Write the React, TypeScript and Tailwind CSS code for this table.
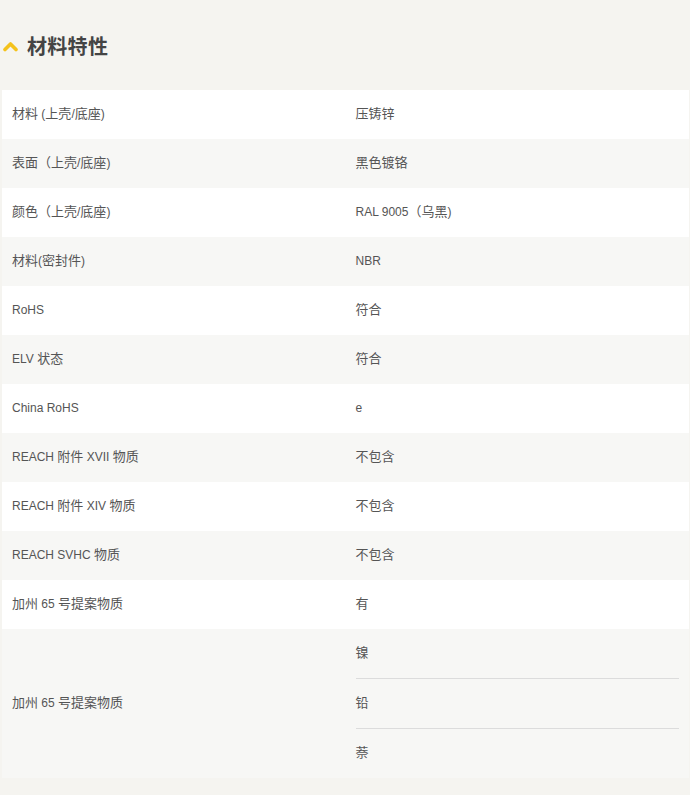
const rows: [string, string[]][] = [
  ["材料 (上壳/底座)", ["压铸锌"]],
  ["表面（上壳/底座)", ["黑色镀铬"]],
  ["颜色（上壳/底座)", ["RAL 9005（乌黑)"]],
  ["材料(密封件)", ["NBR"]],
  ["RoHS", ["符合"]],
  ["ELV 状态", ["符合"]],
  ["China RoHS", ["e"]],
  ["REACH 附件 XVII 物质", ["不包含"]],
  ["REACH 附件 XIV 物质", ["不包含"]],
  ["REACH SVHC 物质", ["不包含"]],
  ["加州 65 号提案物质", ["有"]],
  ["加州 65 号提案物质", ["镍", "铅", "萘"]],
];

// CJK glyphs render a touch larger than the latin ones in the original
function Mixed({ text }: { text: string }) {
  const parts = text.split(/([\u3000-\u9fff\uff00-\uffef]+)/).filter(Boolean);
  return (
    <span className="leading-[16px] -mt-[2px]">
      {parts.map((p, i) =>
        /[\u3000-\u9fff\uff00-\uffef]/.test(p) ? (
          <span key={i} className="text-[13px] leading-[16px]">{p}</span>
        ) : (
          <span key={i} className="text-[12px] leading-[16px]">{p}</span>
        )
      )}
    </span>
  );
}

export default function App() {
  return (
    <div className="w-[690px] h-[795px] bg-[#f5f4f0] font-['Liberation_Sans','Noto_Sans_CJK_SC',sans-serif] text-[#555]">
      <div className="h-[90px] flex items-center gap-[9px] pl-[3px] pt-[3px]">
        <svg width="15" height="11" viewBox="0 0 15 11">
          <path d="M2 8.5 L7.5 3 L13 8.5" fill="none" stroke="#f4c21c" strokeWidth="3.6" strokeLinecap="round" strokeLinejoin="round" />
        </svg>
        <h2 className="text-[20px] font-bold text-[#444] tracking-[0.3px]">材料特性</h2>
      </div>
      <div className="ml-[2px] w-[687px]">
        {rows.map(([label, values], i) => (
          <div
            key={i}
            className={`grid grid-cols-2 ${i % 2 === 0 ? "bg-white" : "bg-[#f7f7f5]"}`}
          >
            <div className="flex items-center px-[10px]">
              <Mixed text={label} />
            </div>
            <div className="flex flex-col pl-[10px] pr-[10px]">
              {values.map((v, j) => (
                <div
                  key={j}
                  className={`h-[49px] flex items-center ${j < values.length - 1 ? "border-b border-[#dcdcdc] h-[50px]" : ""}`}
                >
                  <Mixed text={v} />
                </div>
              ))}
            </div>
          </div>
        ))}
      </div>
    </div>
  );
}
